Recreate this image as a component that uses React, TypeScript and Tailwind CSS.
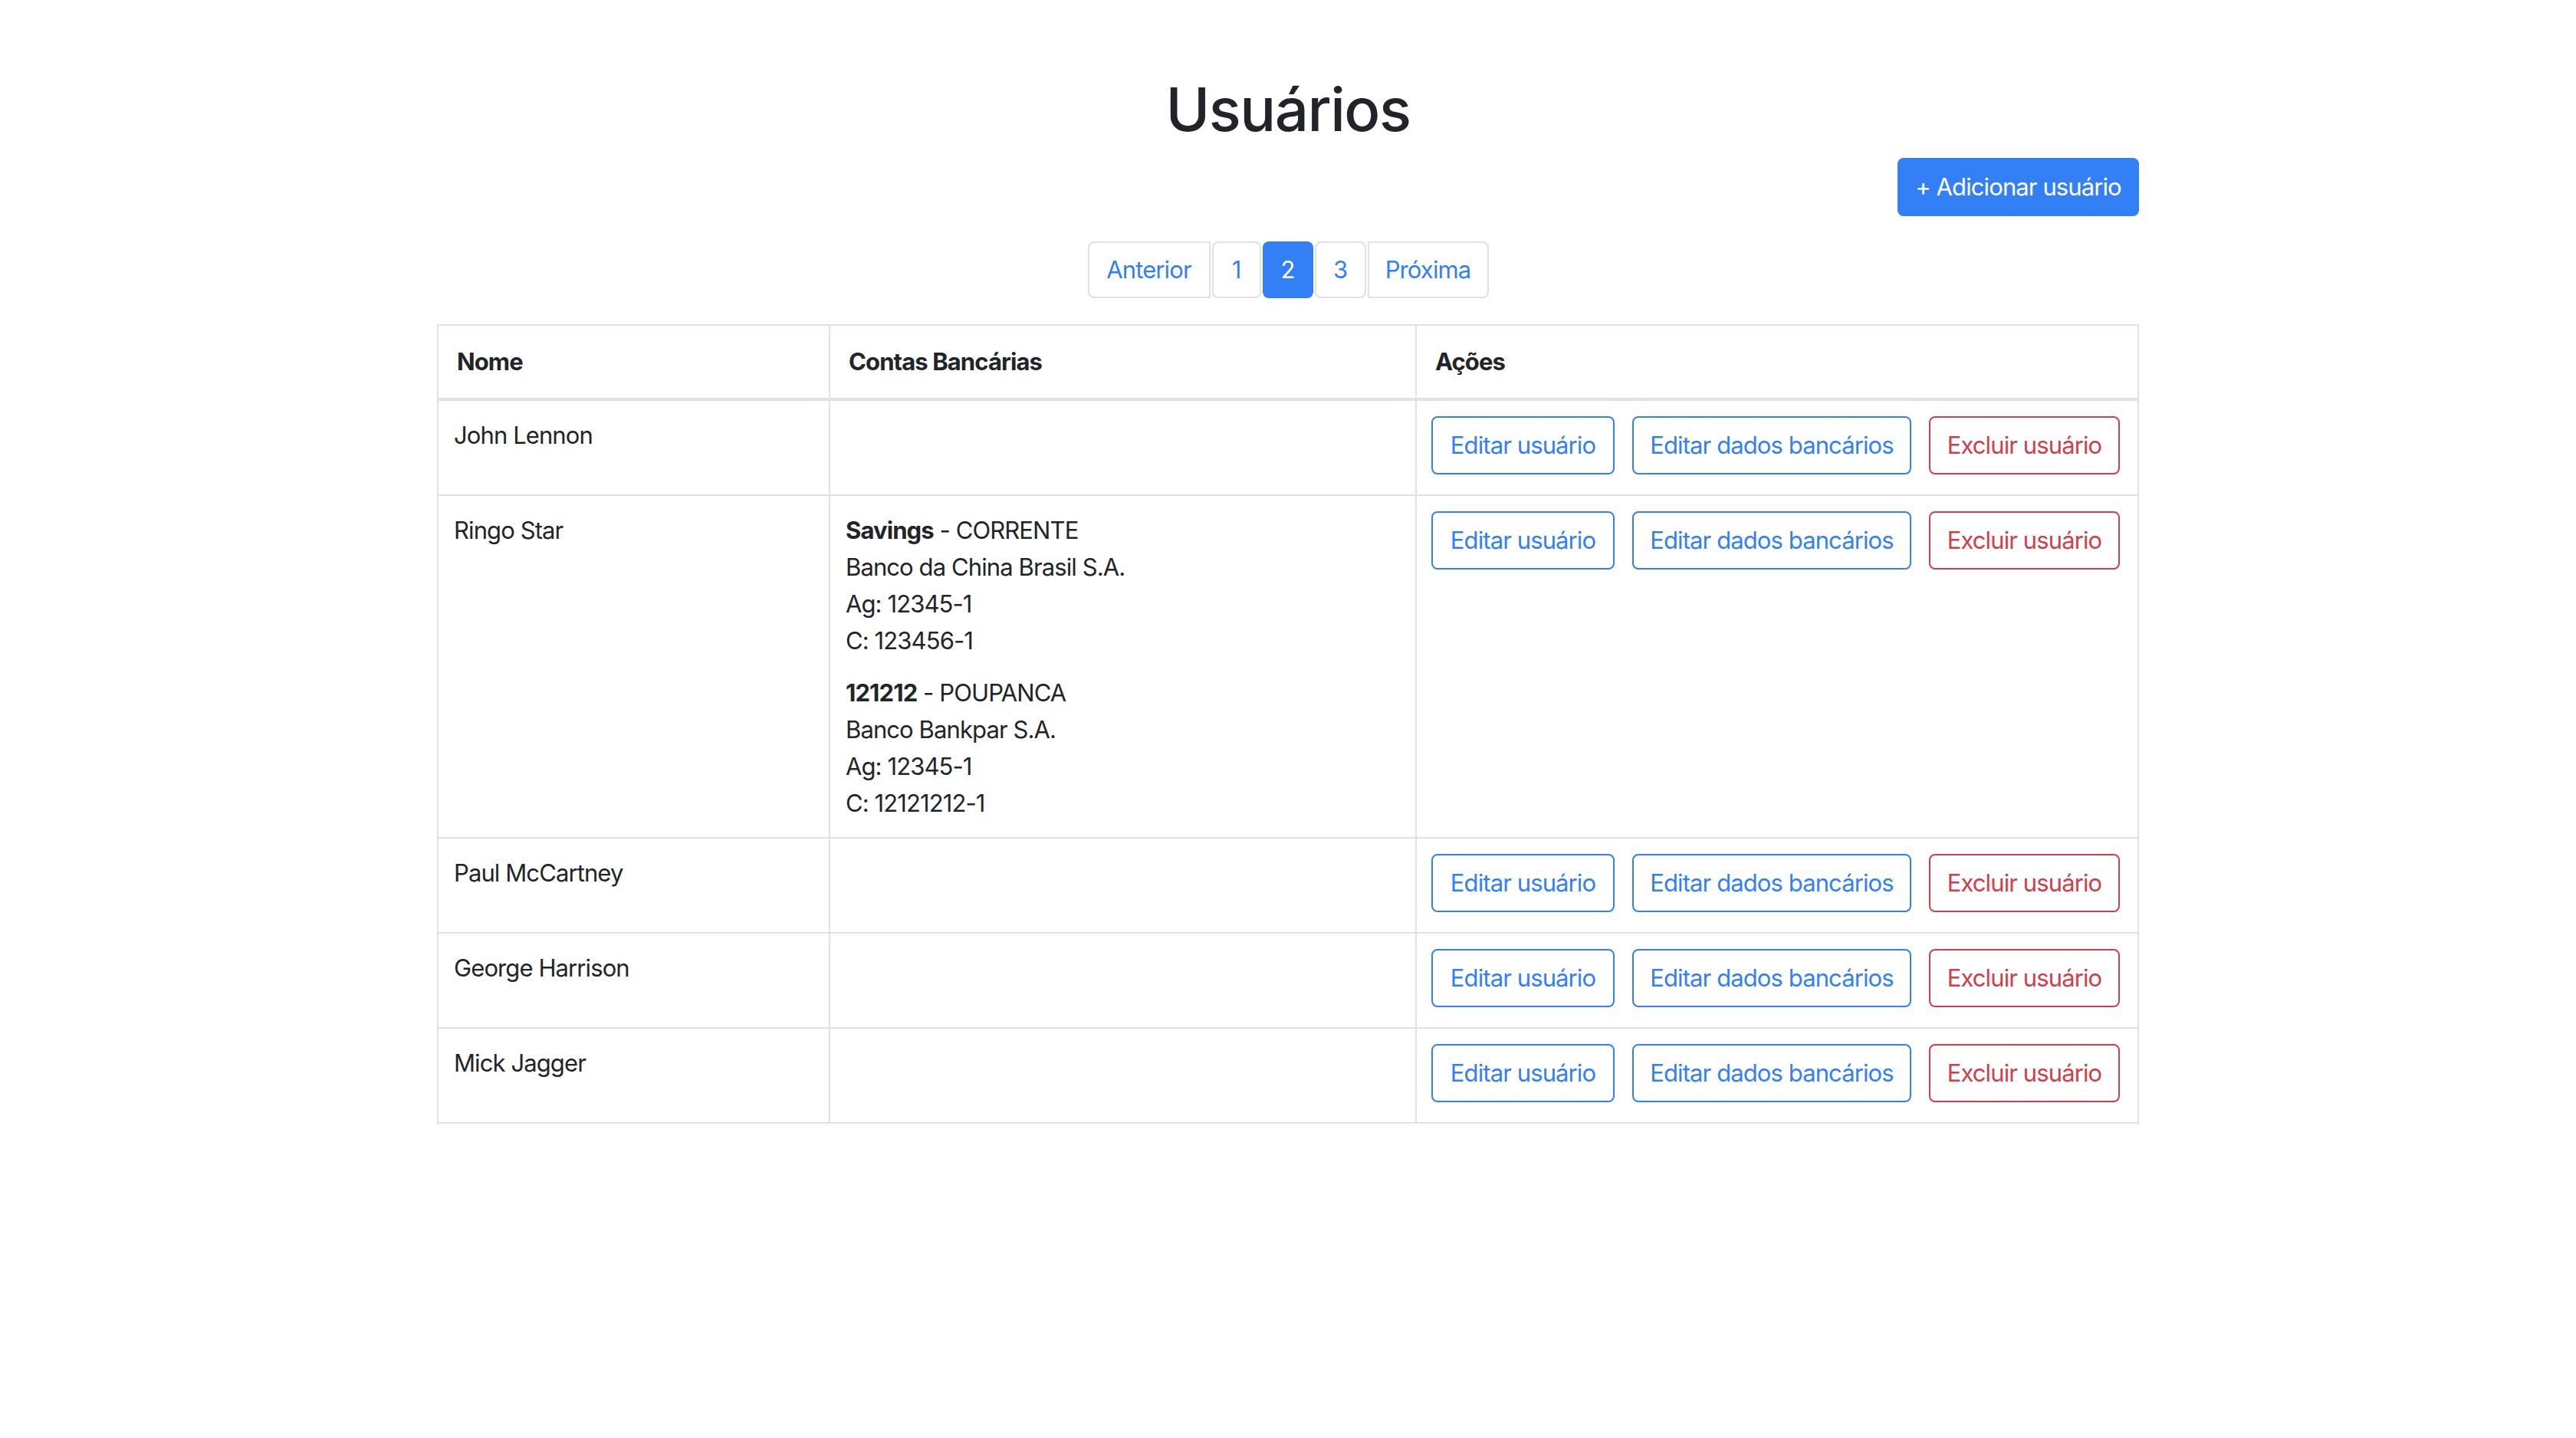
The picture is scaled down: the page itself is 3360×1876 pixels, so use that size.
import React from 'react'

type Conta = { titulo: string; tipo: string; banco: string; agencia: string; conta: string }
type Usuario = { nome: string; contas: Conta[] }

const usuarios: Usuario[] = [
  { nome: 'John Lennon', contas: [] },
  {
    nome: 'Ringo Star',
    contas: [
      { titulo: 'Savings', tipo: 'CORRENTE', banco: 'Banco da China Brasil S.A.', agencia: '12345-1', conta: '123456-1' },
      { titulo: '121212', tipo: 'POUPANCA', banco: 'Banco Bankpar S.A.', agencia: '12345-1', conta: '12121212-1' },
    ],
  },
  { nome: 'Paul McCartney', contas: [] },
  { nome: 'George Harrison', contas: [] },
  { nome: 'Mick Jagger', contas: [] },
]

const font = { fontFamily: 'Inter, "Noto Sans", sans-serif' }

export default function App() {
  return (
    <div className="min-h-[1876px] bg-white text-[#212529] text-[31px] tracking-[-0.9px]" style={font}>
      <div className="mx-auto w-[2220px] pt-[95px]">
        <h1 className="text-center text-[78px] leading-[96px] font-medium tracking-[-1.5px] mb-[15px]">Usuários</h1>

        <div className="flex justify-end">
          <button className="h-[76px] w-[315px] rounded-[8px] bg-[#3380f6] text-white leading-[48px]">
            + Adicionar usuário
          </button>
        </div>

        {/* paginação */}
        <div className="mt-[33px] flex justify-center">
          <nav className="flex gap-[2px] text-[#3380f6] leading-[40px]">
            <a className="flex h-[74px] w-[160px] items-center justify-center rounded-l-[8px] border-2 border-[#dee2e6]">Anterior</a>
            <a className="flex h-[74px] w-[64px] items-center justify-center rounded-[8px] border-2 border-[#dee2e6]">1</a>
            <a className="flex h-[74px] w-[66px] items-center justify-center rounded-[8px] border-2 border-[#3380f6] bg-[#3380f6] text-white">2</a>
            <a className="flex h-[74px] w-[67px] items-center justify-center rounded-[8px] border-2 border-[#dee2e6]">3</a>
            <a className="flex h-[74px] w-[158px] items-center justify-center rounded-r-[8px] border-2 border-[#dee2e6]">Próxima</a>
          </nav>
        </div>

        <table className="mt-[34px] w-[2218px] table-fixed border-collapse leading-[48px]">
          <colgroup>
            <col className="w-[511px]" />
            <col className="w-[765px]" />
            <col className="w-[942px]" />
          </colgroup>
          <thead>
            <tr>
              <th className="border-2 border-b-4 border-[#dee2e6] px-[24px] py-[23px] text-left font-bold">Nome</th>
              <th className="border-2 border-b-4 border-[#dee2e6] px-[24px] py-[23px] text-left font-bold">Contas Bancárias</th>
              <th className="border-2 border-b-4 border-[#dee2e6] px-[24px] py-[23px] text-left font-bold">Ações</th>
            </tr>
          </thead>
          <tbody>
            {usuarios.map((u) => (
              <tr key={u.nome}>
                <td className="border-2 border-[#dee2e6] px-[20px] pt-[21px] pb-[20px] align-top">{u.nome}</td>
                <td className="border-2 border-[#dee2e6] px-[20px] pt-[21px] pb-[20px] align-top">
                  {u.contas.map((c, i) => (
                    <div key={c.titulo} className={i < u.contas.length - 1 ? 'mb-[20px]' : ''}>
                      <div>
                        <span className="font-bold">{c.titulo}</span> - {c.tipo}
                      </div>
                      <div>{c.banco}</div>
                      <div>Ag: {c.agencia}</div>
                      <div>C: {c.conta}</div>
                    </div>
                  ))}
                </td>
                <td className="border-2 border-[#dee2e6] px-[19px] pt-[20px] pb-[26px] align-top">
                  <div className="flex gap-[23px]">
                    <button className="h-[76px] w-[239px] rounded-[8px] border-2 border-[#3380f6] text-[#3380f6]">Editar usuário</button>
                    <button className="h-[76px] w-[364px] rounded-[8px] border-2 border-[#3380f6] text-[#3380f6]">Editar dados bancários</button>
                    <button className="h-[76px] w-[249px] rounded-[8px] border-2 border-[#cf404a] text-[#cf404a]">Excluir usuário</button>
                  </div>
                </td>
              </tr>
            ))}
          </tbody>
        </table>
      </div>
    </div>
  )
}
